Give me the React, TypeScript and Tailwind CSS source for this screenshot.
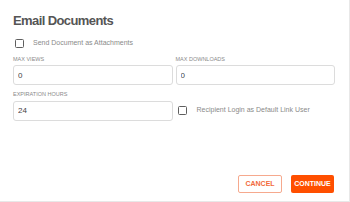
import React, { useState } from 'react';

function Box({ checked, onClick }: { checked: boolean; onClick: () => void }) {
  return (
    <button
      onClick={onClick}
      className="w-[9px] h-[9px] rounded-[1.5px] border-[1.5px] border-[#5f5f5f] bg-white shrink-0"
    >
      {checked && <span className="block w-full h-full bg-[#ff4f00]" />}
    </button>
  );
}

export default function App() {
  const [attach, setAttach] = useState(false);
  const [login, setLogin] = useState(false);
  const [views, setViews] = useState('0');
  const [downloads, setDownloads] = useState('0');
  const [hours, setHours] = useState('24');

  const label = 'block text-[5.5px] leading-[6px] uppercase text-[#8a8a8a] mb-[3.5px]';
  const input =
    'block w-full h-[20px] rounded-[3px] border border-[#dcdcdc] bg-white px-[4px] text-[8px] text-[#444] outline-none';

  return (
    <div className="w-[350px] h-[202px] bg-white border-r border-b border-[#e8e8e8] flex flex-col pl-[13px] pr-[14px] pb-[8px] font-['Liberation_Sans',Arial,sans-serif]">
      <h2 className="mt-[13px] text-[13px] leading-[15px] font-bold tracking-[-0.6px] text-[#555]">Email Documents</h2>

      <div className="mt-[10px] flex items-center gap-[9px] pl-[2px]">
        <Box checked={attach} onClick={() => setAttach(!attach)} />
        <span className="text-[7px] text-[#8a8a8a]">Send Document as Attachments</span>
      </div>

      <div className="mt-[7px] grid grid-cols-2 gap-x-[3px] gap-y-[6px]">
        <div>
          <label className={label}>Max Views</label>
          <input className={input} value={views} onChange={e => setViews(e.target.value)} />
        </div>
        <div>
          <label className={label}>Max Downloads</label>
          <input className={input} value={downloads} onChange={e => setDownloads(e.target.value)} />
        </div>
        <div>
          <label className={label}>Expiration Hours</label>
          <input className={input} value={hours} onChange={e => setHours(e.target.value)} />
        </div>
        <div className="flex items-end">
          <div className="h-[20px] flex items-center gap-[10px] pl-[2px]">
            <Box checked={login} onClick={() => setLogin(!login)} />
            <span className="text-[7px] text-[#8a8a8a]">Recipient Login as Default Link User</span>
          </div>
        </div>
      </div>

      <div className="mt-auto flex justify-end gap-[9px] pr-[1px]">
        <button className="h-[18px] w-[44px] rounded-[2px] border border-[#f6a98e] text-[7px] font-bold text-[#f26a3b] bg-white">
          CANCEL
        </button>
        <button className="h-[18px] w-[43px] rounded-[2px] bg-[#ff4f00] text-[7px] font-bold text-white">
          CONTINUE
        </button>
      </div>
    </div>
  );
}
